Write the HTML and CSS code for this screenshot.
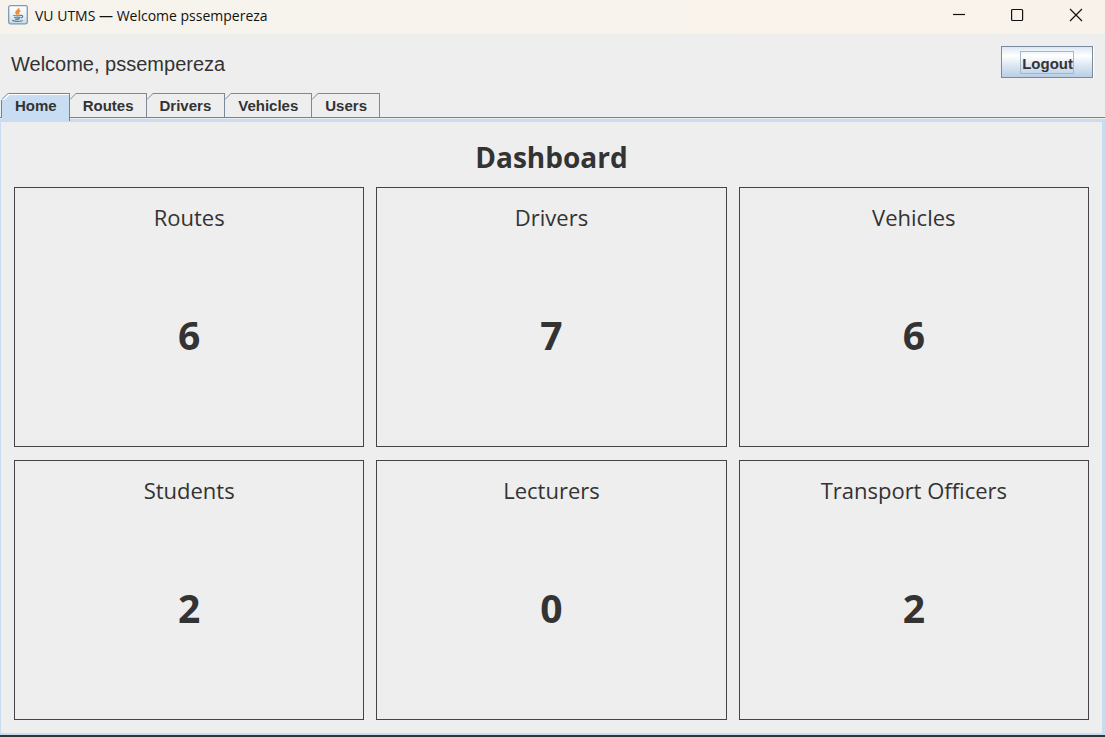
FILE: index.html
```html
<!DOCTYPE html>
<html lang="en">
<head>
<meta charset="utf-8">
<title>VU UTMS — Welcome pssempereza</title>
<link rel="stylesheet" href="styles.css">
</head>
<body>
<div class="window">
  <header class="titlebar">
    <svg class="app-icon" width="20" height="20" viewBox="0 0 20 20" aria-hidden="true">
      <defs><linearGradient id="tile" x1="0" y1="0" x2="0" y2="1"><stop offset="0" stop-color="#fff"/><stop offset=".5" stop-color="#eef2f5"/><stop offset="1" stop-color="#cbd9e4"/></linearGradient></defs>
      <rect x=".7" y=".7" width="18.6" height="18.1" rx="1.8" fill="url(#tile)" stroke="#7b9ab5" stroke-width="1.3"/>
      <path d="M10.600 3.200c1.100 2-3.400 2.800-2.500 4.700.2.600.7 1 1.100 1.600M12.300 5.600c-2.200.6-2.800 1.700-1.800 2.700.5.600.2 1-.2 1.400" fill="none" stroke="#ee8a38" stroke-width="1.800"/>
      <path d="M5.300 10.200c2 .7 5.700.7 8 0M6.100 12.300c2 .8 4.400.7 6.300.1M7 14c1.500.6 3.200.5 4.600 0M13.200 10.500c2.200-.3 1.900 1.900-.3 2.500M4.300 15.400c3 1.300 7.600 1.100 10.500.1" fill="none" stroke="#5382a1" stroke-width="1.200"/>
    </svg>
    <h1 class="title">VU UTMS — Welcome pssempereza</h1>
    <div class="controls">
      <button class="control" type="button" aria-label="Minimize"><svg width="14" height="14" viewBox="0 0 14 14"><path d="M0 6.500h12" /></svg></button>
      <button class="control" type="button" aria-label="Maximize"><svg width="14" height="14" viewBox="0 0 14 14"><rect x=".6" y="1.500" width="11" height="11" rx="1"/></svg></button>
      <button class="control" type="button" aria-label="Close"><svg width="14" height="14" viewBox="0 0 14 14"><path d="M1 1l12 12M13 1L1 13"/></svg></button>
    </div>
  </header>
  <div class="userbar">
    <p class="welcome">Welcome, pssempereza</p>
    <button class="logout" type="button"><span class="logout-label">Logout</span></button>
  </div>
  <div class="tabs" role="tablist">
    <button class="tab selected" type="button" role="tab" aria-selected="true"><svg class="corner" width="7" height="7" viewBox="0 0 7 7"><path class="cut" d="M0 0h6L0 6z"/><path class="shine" d="M1 7L7 1"/><path class="edge" d="M0 6.500L6.500 0"/></svg>Home</button>
    <button class="tab" type="button" role="tab" aria-selected="false"><svg class="corner" width="7" height="7" viewBox="0 0 7 7"><path class="edge" d="M0 6.500L6.500 0"/></svg>Routes</button>
    <button class="tab wide" type="button" role="tab" aria-selected="false"><svg class="corner" width="7" height="7" viewBox="0 0 7 7"><path class="edge" d="M0 6.500L6.500 0"/></svg>Drivers</button>
    <button class="tab wide" type="button" role="tab" aria-selected="false"><svg class="corner" width="7" height="7" viewBox="0 0 7 7"><path class="edge" d="M0 6.500L6.500 0"/></svg>Vehicles</button>
    <button class="tab" type="button" role="tab" aria-selected="false"><svg class="corner" width="7" height="7" viewBox="0 0 7 7"><path class="edge" d="M0 6.500L6.500 0"/></svg>Users</button>
  </div>
  <main class="panel" role="tabpanel">
    <h2 class="heading">Dashboard</h2>
    <div class="cards">
      <section class="card"><h3 class="card-title">Routes</h3><p class="count">6</p></section>
      <section class="card"><h3 class="card-title">Drivers</h3><p class="count">7</p></section>
      <section class="card"><h3 class="card-title">Vehicles</h3><p class="count">6</p></section>
      <section class="card"><h3 class="card-title">Students</h3><p class="count">2</p></section>
      <section class="card"><h3 class="card-title">Lecturers</h3><p class="count">0</p></section>
      <section class="card"><h3 class="card-title">Transport Officers</h3><p class="count">2</p></section>
    </div>
  </main>
</div>
</body>
</html>
```
FILE: styles.css
```css
* { box-sizing: border-box; }
body { margin: 0; background: #333; color: #333; font-family: "Liberation Sans", Arial, sans-serif; }
h1, h2, h3, p { margin: 0; }
button { font: inherit; color: inherit; }

.window {
  display: flex;
  flex-direction: column;
  min-height: 100vh;
  background: #eee;
  border-bottom: 2px solid #333;
  border-radius: 0 0 4px 4px;
}

.titlebar {
  display: flex;
  align-items: center;
  height: 34px;
  padding: 0 0 4px 8px;
  background: linear-gradient(90deg, #f6f3ed, #f9f2eb);
  color: #111;
}
.title {
  flex: 1;
  margin-left: 7px;
  padding-top: 2px;
  font: 400 14px/20px "Open Sans", "Noto Sans", sans-serif;
}
.controls { display: flex; }
.control {
  display: flex;
  align-items: center;
  justify-content: center;
  width: 58px;
  height: 30px;
  padding: 0;
  border: 0;
  background: none;
}
.control svg { fill: none; stroke: #111; stroke-width: 1.2; }

.userbar {
  display: flex;
  align-items: center;
  justify-content: space-between;
  padding: 12px 12px 10px 11px;
}
.welcome {
  padding-top: 4px;
  font-size: 20px;
  line-height: 28px;
}
.logout {
  height: 32px;
  padding: 0 18px;
  border: 1px solid #7a8a99;
  background: linear-gradient(#dde8f3, #fff 30%, #dde8f3 60%, #b8cfe5);
  box-shadow: 1px 0 #fff;
  font-size: 15px;
  font-weight: 700;
}
.logout-label {
  display: block;
  padding: 2px 0 0 1px;
  border: 1px solid #a3b8cc;
  line-height: 19px;
}

.tabs {
  display: flex;
  padding: 5px 0 0 2px;
  border-bottom: 1px solid #6382bf;
}
.tab {
  position: relative;
  height: 24px;
  padding: 1px 12px 0 13px;
  border: 0;
  border-right: 1px solid #7a8a99;
  background: none;
  font-size: 15px;
  font-weight: 700;
  line-height: 23px;
}
.wide { padding-right: 13px; }
.tab::before {
  content: "";
  position: absolute;
  top: 0;
  right: 0;
  left: 6px;
  border-top: 1px solid #7a8a99;
}
.corner { position: absolute; top: 0; left: 0; }
.edge { fill: none; stroke: #7a8a99; }
.cut { fill: #eee; }
.shine { stroke: #fff; stroke-width: 2; }
.selected {
  height: 28px;
  margin-bottom: -4px;
  padding-bottom: 4px;
  border-right-color: #6382bf;
  background: #c8ddf2;
  box-shadow: inset 0 2px #fff;
  z-index: 1;
}
.selected::before { border-color: #6382bf; }
.selected .edge { stroke: #6382bf; }
.selected::after {
  content: "";
  position: absolute;
  top: 7px;
  bottom: 4px;
  left: -1px;
  border-left: 1px solid #6382bf;
}

.panel {
  flex: 1;
  display: flex;
  flex-direction: column;
  margin-top: 1px;
  padding: 14px 13px 13px;
  border: solid #c8ddf2;
  border-width: 3px 3px 2px 1px;
}
.heading {
  margin-bottom: 9px;
  font: 700 28px/42px "Open Sans", "Noto Sans", sans-serif;
  text-align: center;
}
.cards {
  flex: 1;
  display: grid;
  grid-template-columns: repeat(3, 1fr);
  grid-auto-rows: 1fr;
  gap: 13px 12px;
}
.card {
  display: flex;
  flex-direction: column;
  padding: 13px 12px 10px;
  border: 1px solid #444;
  font-family: "Open Sans", "Noto Sans", sans-serif;
  text-align: center;
}
.card-title { font-size: 22px; font-weight: 400; line-height: 32px; }
.count {
  flex: 1;
  display: grid;
  place-items: center;
  font-size: 39px;
  font-weight: 700;
  line-height: 48px;
}
```
